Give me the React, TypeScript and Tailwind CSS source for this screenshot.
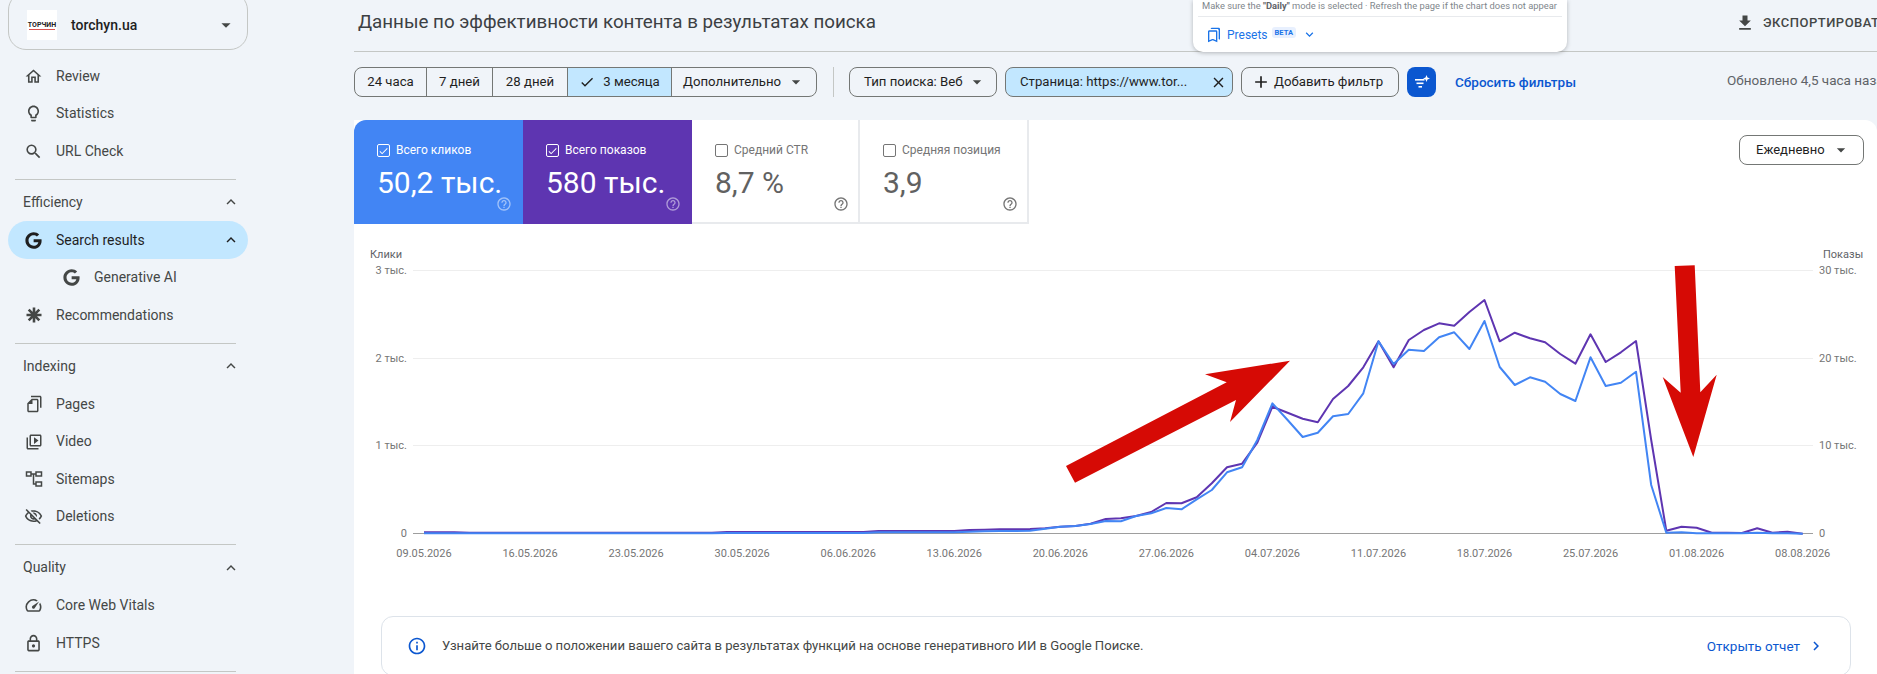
import React from 'react';
import {
  MdOutlineHome,
  MdOutlineLightbulb,
  MdSearch,
  MdExpandLess,
  MdExpandMore,
  MdArrowDropDown,
  MdOutlineFileCopy,
  MdOutlineVideoLibrary,
  MdOutlineVisibilityOff,
  MdOutlineSpeed,
  MdOutlineLock,
  MdFileDownload,
  MdCheck,
  MdAdd,
  MdClose,
  MdInfoOutline,
  MdChevronRight,
  MdHelpOutline,
  MdOutlineBookmarks,
} from 'react-icons/md';
import { FaGoogle } from 'react-icons/fa';

const GoogleIcon = ({ size = 17 }: { size?: number }) => <FaGoogle size={size} />;

const SitemapsIcon = () => (
  <svg width="18" height="18" viewBox="0 0 18 18" fill="none" stroke="currentColor" strokeWidth="1.5">
    <rect x="1.5" y="2" width="4.5" height="4" />
    <rect x="11" y="2" width="5.5" height="4" />
    <rect x="11" y="12" width="5.5" height="4" />
    <path d="M6 4h5M8.5 4v10H11" />
  </svg>
);

const AsteriskIcon = () => (
  <svg width="18" height="18" viewBox="0 0 18 18" fill="none" stroke="currentColor" strokeWidth="2.6">
    <path d="M9 1.5v15M1.5 9h15M3.7 3.7l10.6 10.6M14.3 3.7L3.7 14.3" />
  </svg>
);

const FilterSparkIcon = () => (
  <svg width="18" height="18" viewBox="0 0 18 18" fill="white">
    <rect x="2" y="6" width="9.5" height="1.6" />
    <rect x="3.5" y="9.5" width="7" height="1.6" />
    <rect x="5.5" y="13" width="3.5" height="1.6" />
    <path d="M13.5 2l1 2.5 2.5 1-2.5 1-1 2.5-1-2.5-2.5-1 2.5-1z" />
  </svg>
);

type NavEntry = { label: string; icon: React.ReactNode; active?: boolean; indent?: boolean; chevron?: boolean };

const NavItem = ({ label, icon, active, indent, chevron }: NavEntry) => (
  <div
    className={`mx-2 flex h-[37.5px] items-center rounded-full pt-[1px] text-[14px] ${
      active ? 'bg-[#c2e7ff] text-[#1f1f1f]' : 'text-[#444746]'
    } ${indent ? 'pl-[54px]' : 'pl-4'}`}
  >
    <span className="flex w-[19px] shrink-0 justify-center">{icon}</span>
    <span className="ml-[13px] flex-1">{label}</span>
    {chevron && <MdExpandLess size={18} className="mr-[8px]" />}
  </div>
);

const NavSection = ({ title, items }: { title: string; items: NavEntry[] }) => (
  <div className="ml-[15px] mr-[20px] border-t border-[#c4c7c5] pb-[9px] pt-1">
    <div className="-ml-[15px] -mr-[20px]">
      <div className="flex h-[37.5px] items-center pl-[23px] pr-[16px] text-[14px] text-[#444746]">
        <span className="flex-1">{title}</span>
        <MdExpandLess size={18} />
      </div>
      {items.map((item) => (
        <NavItem key={item.label} {...item} />
      ))}
    </div>
  </div>
);

const Sidebar = () => (
  <aside className="w-[354px] shrink-0 text-[#444746]">
    <div className="w-[256px]">
      <div className="mx-2 -mt-2 flex h-[58px] items-center rounded-[18px] border border-[#c4c7c5] pl-[18px] pr-[10px] pt-2">
        <div className="flex h-[30px] w-[30px] flex-col items-center justify-center bg-white">
          <span className="text-[7px] font-bold leading-[8px] text-[#222]">ТОРЧИН</span>
          <span className="h-[1px] w-[26px] bg-[#d9534f]" />
        </div>
        <span className="ml-[14px] flex-1 text-[14px] font-medium text-[#1f1f1f]">torchyn.ua</span>
        <MdArrowDropDown size={22} className="text-[#444746]" />
      </div>
      <div className="pb-[9px] pt-[7px]">
        <NavItem label="Review" icon={<MdOutlineHome size={19} />} />
        <NavItem label="Statistics" icon={<MdOutlineLightbulb size={19} />} />
        <NavItem label="URL Check" icon={<MdSearch size={19} />} />
      </div>
      <NavSection
        title="Efficiency"
        items={[
          { label: 'Search results', icon: <GoogleIcon />, active: true, chevron: true },
          { label: 'Generative AI', icon: <GoogleIcon />, indent: true },
          { label: 'Recommendations', icon: <AsteriskIcon /> },
        ]}
      />
      <NavSection
        title="Indexing"
        items={[
          { label: 'Pages', icon: <MdOutlineFileCopy size={18} className="-scale-x-100" /> },
          { label: 'Video', icon: <MdOutlineVideoLibrary size={18} /> },
          { label: 'Sitemaps', icon: <SitemapsIcon /> },
          { label: 'Deletions', icon: <MdOutlineVisibilityOff size={19} /> },
        ]}
      />
      <NavSection
        title="Quality"
        items={[
          { label: 'Core Web Vitals', icon: <MdOutlineSpeed size={19} /> },
          { label: 'HTTPS', icon: <MdOutlineLock size={19} /> },
        ]}
      />
      <div className="ml-[15px] mr-[20px] border-t border-[#c4c7c5]" />
    </div>
  </aside>
);

const PresetsPanel = () => (
  <div className="absolute left-[839px] top-0 h-[52px] w-[374px] rounded-b-[10px] bg-white px-[5px] shadow-[0_1px_4px_rgba(60,64,67,0.35)]">
    <div className="h-[17px] border-b border-[#e8eaed] px-1 pt-[1px] text-[9.35px] leading-[10px] whitespace-nowrap text-[#80868b]">
      Make sure the <b className="font-bold text-[#5f6368]">"Daily"</b> mode is selected · Refresh the page if the chart does not appear
    </div>
    <div className="flex h-[35px] items-center pl-[8px] text-[#1a73e8]">
      <MdOutlineBookmarks size={16} />
      <span className="ml-[5px] text-[12px]">Presets</span>
      <span className="ml-[4px] -mt-[5px] rounded-[3px] bg-[#e8f0fe] px-[3px] text-[7.5px] font-bold leading-[11px]">BETA</span>
      <MdExpandMore size={15} className="ml-[6px]" />
    </div>
  </div>
);

const ranges = [
  { label: '24 часа', width: 'w-[72px]' },
  { label: '7 дней', width: 'w-[66px]' },
  { label: '28 дней', width: 'w-[75px]' },
];

const FilterRow = () => (
  <div className="flex h-[68px] shrink-0 pt-[15px] text-[13.2px] text-[#1f1f1f]">
    <div className="flex h-[30px] shrink-0 overflow-hidden rounded-lg border border-[#747775]">
      {ranges.map((r) => (
        <div key={r.label} className={`flex ${r.width} items-center justify-center border-r border-[#747775]`}>
          {r.label}
        </div>
      ))}
      <div className="flex w-[104px] items-center justify-center gap-[8px] border-r border-[#747775] bg-[#c2e7ff]">
        <MdCheck size={16} />
        3 месяца
      </div>
      <div className="flex w-[144px] items-center pl-[11px]">
        Дополнительно
        <MdArrowDropDown size={20} className="ml-[5px] text-[#444746]" />
      </div>
    </div>
    <div className="ml-[16px] h-[30px] shrink-0 border-l border-[#c4c7c5]" />
    <div className="ml-[15px] flex h-[30px] w-[148px] shrink-0 items-center rounded-lg border border-[#747775] pl-[14px]">
      Тип поиска: Веб
      <MdArrowDropDown size={20} className="ml-[4px] text-[#444746]" />
    </div>
    <div className="ml-[8px] flex h-[30px] w-[228px] shrink-0 items-center rounded-lg border border-[#747775] bg-[#c2e7ff] pl-[14px]">
      <span className="flex-1">Страница: https://www.tor...</span>
      <MdClose size={17} className="mr-[5px]" />
    </div>
    <div className="ml-[8px] flex h-[30px] w-[158px] shrink-0 items-center rounded-lg border border-[#747775] pl-[9px]">
      <MdAdd size={20} />
      <span className="ml-[3px]">Добавить фильтр</span>
    </div>
    <div className="ml-[8px] flex h-[30px] w-[29px] shrink-0 items-center justify-center rounded-lg bg-[#0b57d0]">
      <FilterSparkIcon />
    </div>
    <a className="ml-[19px] flex h-[30px] shrink-0 items-center text-[13.5px] font-medium text-[#0b57d0]">Сбросить фильтры</a>
    <span className="ml-[151px] flex h-[26px] shrink-0 items-center whitespace-nowrap text-[13.5px] text-[#5f6368]">
      Обновлено 4,5 часа назад
    </span>
  </div>
);

type TileProps = { label: string; value: string; selected?: boolean; bg?: string; width: string };

const Tile = ({ label, value, selected, bg, width }: TileProps) => (
  <div
    className={`relative h-[104px] ${width} pl-[23px] pt-[24px] ${
      selected ? `${bg} text-white` : 'border-b-2 border-r-2 border-[#e8eaed] text-[#757575]'
    }`}
  >
    <div className="flex items-center text-[12px] leading-[13px]">
      <span
        className={`flex h-[13px] w-[13px] items-center justify-center rounded-[2px] border ${
          selected ? 'border-white' : 'border-[#757575]'
        }`}
      >
        {selected && <MdCheck size={12} />}
      </span>
      <span className="ml-[6px]">{label}</span>
    </div>
    <div className={`mt-[6px] text-[30px] leading-[40px] whitespace-nowrap ${selected ? '' : 'text-[#616161]'}`}>{value}</div>
    <MdHelpOutline
      size={16}
      className={`absolute ${selected ? 'bottom-[12px] right-[11px] opacity-50' : 'bottom-[10px] right-[9px] text-[#757575]'}`}
    />
  </div>
);

// значения сняты с графика: y = 240 + v / 3, точка на каждый день
const flat = (n: number, v: number) => Array.from({ length: n }, () => v);

const impressions = [
  ...flat(3, 877), ...flat(17, 878), ...flat(10, 876), ...flat(6, 873),
  870, 869, 868, 868, 867, 865, 860, 858, 851, 837, 835, 828, 816, 789, 790, 772, 730, 682, 671, 608,
  500, 518, 536, 547, 477, 438, 382, 304, 382, 300, 270, 250, 257, 216, 180, 304, 278, 295, 307, 342,
  371, 283, 366, 337, 303, 600, 872, 860, 863, 878, 878, 879, 865, 878, 875, 881,
];

const clicks = [
  ...flat(20, 880), ...flat(10, 879), ...flat(6, 877),
  875, 874, 873, 873, 872, 866, 860, 858, 852, 843, 844, 828, 820, 804, 808, 778, 750, 697, 682, 600,
  490, 540, 591, 578, 529, 522, 460, 304, 372, 329, 333, 292, 277, 327, 243, 381, 435, 412, 425, 462,
  483, 352, 438, 428, 395, 735, 878, 877, 880, 880, 880, 880, 878, 880, 880, 881,
];

const dayX = (i: number) => 424 + i * 15.15;
const toPoints = (vals: number[]) => vals.map((v, i) => `${dayX(i).toFixed(1)},${(240 + v / 3).toFixed(1)}`).join(' ');

const dates = [
  '09.05.2026', '16.05.2026', '23.05.2026', '30.05.2026', '06.06.2026', '13.06.2026', '20.06.2026',
  '27.06.2026', '04.07.2026', '11.07.2026', '18.07.2026', '25.07.2026', '01.08.2026', '08.08.2026',
];

const grid = [
  { y: 270.5, left: '3 тыс.', right: '30 тыс.' },
  { y: 358.5, left: '2 тыс.', right: '20 тыс.' },
  { y: 445.5, left: '1 тыс.', right: '10 тыс.' },
];

const Chart = () => (
  <svg viewBox="354 224 1523 376" width="1523" height="376" className="block" style={{ fontFamily: 'Roboto, sans-serif' }}>
    <text x="370" y="258" fontSize="11" fill="#5f6368">Клики</text>
    <text x="1823" y="258" fontSize="11" fill="#5f6368">Показы</text>
    {grid.map((g) => (
      <g key={g.y}>
        <line x1="413" x2="1813" y1={g.y} y2={g.y} stroke="#eeeeee" />
        <text x="407" y={g.y + 3} textAnchor="end" fontSize="11" fill="#757575">{g.left}</text>
        <text x="1819" y={g.y + 3} fontSize="11" fill="#757575">{g.right}</text>
      </g>
    ))}
    <line x1="413" x2="1813" y1="533.5" y2="533.5" stroke="#9e9e9e" />
    <text x="407" y="536.5" textAnchor="end" fontSize="11" fill="#757575">0</text>
    <text x="1819" y="536.5" fontSize="11" fill="#757575">0</text>
    {dates.map((d, i) => (
      <text key={d} x={dayX(i * 7)} y="557" textAnchor="middle" fontSize="11" fill="#757575">{d}</text>
    ))}
    <polyline points={toPoints(impressions)} fill="none" stroke="#5e35b1" strokeWidth="2" strokeLinejoin="round" />
    <polyline points={toPoints(clicks)} fill="none" stroke="#4285f4" strokeWidth="2" strokeLinejoin="round" />
    <polygon
      points="1290,360.7 1205,374.3 1226.7,382.3 1066,466 1075,482.7 1236,400 1230,422"
      fill="#d60a05"
    />
    <polygon
      points="1674.7,266 1694.7,265.3 1700.3,392.3 1716.7,374.7 1693.3,457 1662.7,377 1680.7,392.7"
      fill="#d60a05"
    />
  </svg>
);

export default function App() {
  return (
    <div className="flex h-[674px] w-full overflow-hidden bg-[#f0f4f9] font-['Roboto',sans-serif]">
      <Sidebar />
      <main className="relative flex min-w-0 flex-1 flex-col overflow-hidden">
        <PresetsPanel />
        <header className="flex h-[52px] shrink-0 items-center border-b border-[#c4c7c5] pb-[6px] pl-1">
          <h1 className="flex-1 text-[18.75px] text-[#3c4043]">Данные по эффективности контента в результатах поиска</h1>
          <div className="flex w-[142px] shrink-0 items-center overflow-hidden text-[13px] font-medium tracking-[0.5px] whitespace-nowrap text-[#444746]">
            <MdFileDownload size={20} className="mr-[8px] shrink-0" />
            ЭКСПОРТИРОВАТЬ
          </div>
        </header>
        <FilterRow />
        <section className="min-h-0 flex-1 rounded-tr-xl bg-white">
          <div className="flex items-start justify-between">
            <div className="flex overflow-hidden rounded-tl-xl">
              <Tile label="Всего кликов" value="50,2 тыс." selected bg="bg-[#4285f4]" width="w-[169px]" />
              <Tile label="Всего показов" value="580 тыс." selected bg="bg-[#5e35b1]" width="w-[169px]" />
              <Tile label="Средний CTR" value="8,7 %" width="w-[168px]" />
              <Tile label="Средняя позиция" value="3,9" width="w-[169px]" />
            </div>
            <div className="mr-[13px] mt-[15px] flex h-[30px] w-[125px] items-center rounded-lg border border-[#747775] pl-4 text-[13px] text-[#1f1f1f]">
              Ежедневно
              <MdArrowDropDown size={20} className="ml-[6px] text-[#444746]" />
            </div>
          </div>
          <Chart />
          <div className="ml-[27px] mt-[16px] flex h-[60px] w-[1470px] items-center rounded-xl border border-[#dde3ea] pl-[25px] pr-[25px] text-[13.1px] text-[#444746]">
            <MdInfoOutline size={20} className="text-[#0b57d0]" />
            <span className="ml-[15px] flex-1">
              Узнайте больше о положении вашего сайта в результатах функций на основе генеративного ИИ в Google Поиске.
            </span>
            <span className="text-[13.5px] text-[#0b57d0]">Открыть отчет</span>
            <MdChevronRight size={18} className="ml-[7px] text-[#0b57d0]" />
          </div>
        </section>
      </main>
    </div>
  );
}
